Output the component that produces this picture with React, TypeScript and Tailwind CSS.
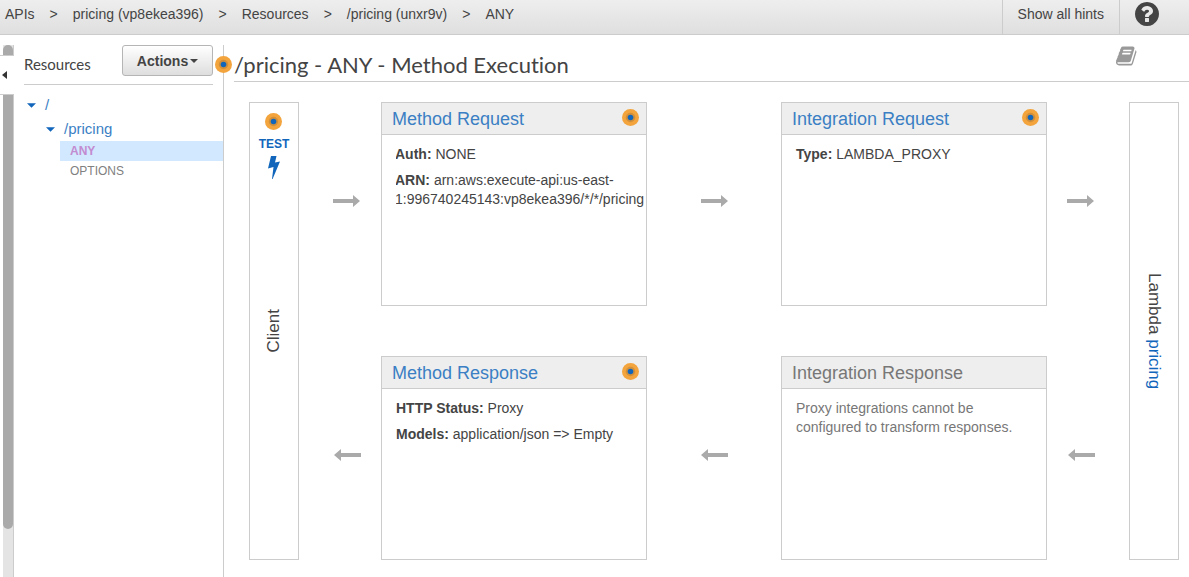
import { Fragment, ReactNode } from 'react';

const CRUMBS = ['APIs', 'pricing (vp8ekea396)', 'Resources', '/pricing (unxr9v)'];

const HintDot = () => (
	<svg className="block h-[17px] w-[17px] shrink-0" viewBox="0 0 17 17" aria-hidden="true">
		<circle cx="8.5" cy="8.5" r="8.5" fill="#f3a43c" />
		<circle cx="8.5" cy="8.5" r="4.7" fill="#d18f3b" />
		<circle cx="8.5" cy="8.5" r="2.8" fill="#1166bb" />
	</svg>
);

const Arrow = ({ back = false }: { back?: boolean }) => (
	<svg className={back ? 'h-3 w-[27px] rotate-180' : 'h-3 w-[27px]'} viewBox="0 0 27 12" aria-hidden="true">
		<path d="M0 4h20V0l7 6-7 6V8H0z" fill="#aaa" />
	</svg>
);

const Caret = ({ className }: { className: string }) => (
	<svg className={className} viewBox="0 0 10 5" aria-hidden="true">
		<path d="M0 0h10L5 5z" fill="currentColor" />
	</svg>
);

const BookIcon = () => (
	<svg className="h-[22px] w-[22px]" viewBox="0 0 1792 1792" fill="currentColor" aria-hidden="true">
		<path d="M1639 478q40 57 18 129l-275 906q-19 64-76.5 107.5t-122.5 43.5h-923q-77 0-148.5-53.5t-99.5-131.5q-24-67-2-127 0-4 3-27t4-37q1-8-3-21.5t-3-19.5q2-11 8-21t16.5-23.5 16.5-23.5q23-38 45-91.5t30-91.5q3-10 .5-30t-.5-28q3-11 17-28t17-23q21-36 42-92t25-90q1-9-2.5-32t.5-28q4-13 22-30.5t22-22.5q19-26 42.5-84.5t27.5-96.5q1-8-3-25.5t-2-26.5q2-8 9-18t18-23 17-21q8-12 16.5-30.5t15-35 16-36 19.5-32 26.5-23.5 36-11.5 47.5 5.5l-1 3q38-9 51-9h761q74 0 114 56t18 130l-274 906q-36 119-71.5 153.5t-128.5 34.5h-869q-27 0-38 15-11 16-1 43 24 70 144 70h923q29 0 56-15.5t35-41.5l300-987q7-22 5-57 38 15 59 43zm-1064 2q-4 13 2 22.5t20 9.5h608q13 0 25.5-9.5t16.5-22.5l21-64q4-13-2-22.5t-20-9.5h-608q-13 0-25.5 9.5t-16.5 22.5zm-83 256q-4 13 2 22.5t20 9.5h608q13 0 25.5-9.5t16.5-22.5l21-64q4-13-2-22.5t-20-9.5h-608q-13 0-25.5 9.5t-16.5 22.5z" />
	</svg>
);

const HelpIcon = () => (
	<svg className="h-7 w-7" viewBox="0 0 1792 1792" fill="currentColor" aria-hidden="true">
		<path d="M1024 1376v-192q0-14-9-23t-23-9h-192q-14 0-23 9t-9 23v192q0 14 9 23t23 9h192q14 0 23-9t9-23zm256-672q0-88-55.5-163t-138.5-116-170-41q-243 0-371 213-15 24 8 42l132 100q7 6 19 6 16 0 25-12 53-68 86-92 34-24 86-24 48 0 85.5 26t37.5 59q0 38-20 61t-68 45q-63 28-115.5 86.5t-52.5 125.5v36q0 14 9 23t23 9h192q14 0 23-9t9-23q0-19 21.5-49.5t54.5-49.5q32-18 49-28.5t46-35 44.5-48 28-60.5 12.5-81zm384 192q0 209-103 385.5t-279.5 279.5-385.5 103-385.5-103-279.5-279.5-103-385.5 103-385.5 279.5-279.5 385.5-103 385.5 103 279.5 279.5 103 385.5z" />
	</svg>
);

const TopBar = () => (
	<header className="flex h-[35px] items-stretch border-b border-[#ccc] bg-linear-to-b from-[#eee] to-[#dfdfdf] text-sm">
		<nav aria-label="Breadcrumb" className="flex flex-1 items-center gap-[15px] pb-1.5 pl-[5px] whitespace-nowrap">
			{CRUMBS.map((crumb) => (
				<Fragment key={crumb}>
					<a href="#" className="hover:underline">
						{crumb}
					</a>
					<span>&gt;</span>
				</Fragment>
			))}
			<span>ANY</span>
		</nav>
		<button className="border-l border-[#ccc] px-[15px] pb-1.5 whitespace-nowrap">Show all hints</button>
		<button aria-label="Help" className="border-l border-[#ccc] pr-7 pb-1.5 pl-[13px] text-[#444]">
			<HelpIcon />
		</button>
	</header>
);

const CollapseRail = () => (
	<div className="relative w-3.5 shrink-0 border-r border-[#ccc] pl-[3px]">
		<div className="h-full bg-[#e4e4e4]">
			<div className="h-[91%] rounded-full bg-[#aaa]" />
		</div>
		<button
			aria-label="Collapse resources"
			className="absolute top-2.5 left-0 flex h-10 w-3.5 items-center border-y border-[#ccc] bg-white pl-0.5"
		>
			<svg className="h-2 w-[5px]" viewBox="0 0 5 8" aria-hidden="true">
				<path d="M5 0v8L0 4z" fill="#333" />
			</svg>
		</button>
	</div>
);

const ResourceTree = () => (
	<aside className="w-[210px] shrink-0 border-r border-[#ccc] pl-2.5">
		<div className="mr-2.5 flex h-10 items-start justify-between border-b border-[#ccc]">
			<h2 className="pt-[9px] font-[Lato,sans-serif] text-[15px] leading-5">Resources</h2>
			<button className="flex h-[31px] w-[91px] items-center justify-center gap-0.5 rounded-[3px] border border-[#b5b5b5] bg-linear-to-b from-white to-[#dedede] text-sm font-bold">
				Actions
				<Caret className="h-1 w-2" />
			</button>
		</div>
		<ul className="mt-2 text-[15px] leading-6 text-[#3b7fc4]">
			<li>
				<a href="#" className="flex items-center gap-[9px] pl-[3px]">
					<Caret className="h-[5px] w-[9px] text-[#1166bb]" />/
				</a>
				<ul>
					<li>
						<a href="#" className="flex items-center gap-[9px] pl-[22px]">
							<Caret className="h-[5px] w-[9px] text-[#1166bb]" />
							/pricing
						</a>
						<ul className="ml-9 text-xs leading-5">
							<li>
								<a href="#" className="block bg-[#d1e8ff] pl-2.5 font-bold text-[#c38bd0]">
									ANY
								</a>
							</li>
							<li>
								<a href="#" className="block pl-2.5 text-[#808080]">
									OPTIONS
								</a>
							</li>
						</ul>
					</li>
				</ul>
			</li>
		</ul>
	</aside>
);

type CardProps = {
	title: string;
	disabled?: boolean;
	children: ReactNode;
};

const StageCard = ({ title, disabled = false, children }: CardProps) => (
	<section className="min-w-0 border border-[#ccc]">
		<div className="flex h-8 items-start justify-between border-b border-[#ccc] bg-[#eee] pt-1 pr-[7px] pl-2.5">
			<h3 className="text-lg leading-6">
				{disabled ? (
					<span className="text-[#777]">{title}</span>
				) : (
					<a href="#" className="text-[#3b7fc4] hover:underline">
						{title}
					</a>
				)}
			</h3>
			{!disabled && (
				<div className="pt-0.5">
					<HintDot />
				</div>
			)}
		</div>
		<div className="pt-2.5 pl-3.5 text-sm leading-[19px]">{children}</div>
	</section>
);

const Field = ({ label, children }: { label: string; children: ReactNode }) => (
	<p className="mb-[7px] break-words">
		<b>{label}:</b> {children}
	</p>
);

const MethodExecution = () => (
	<main className="min-w-0 flex-1">
		<div className="relative ml-2.5 flex h-[37px] items-start justify-between border-b border-[#ccc] pr-[51px]">
			<div className="absolute top-[11px] -left-[19px]">
				<HintDot />
			</div>
			<h1 className="pt-1.5 font-[Lato,sans-serif] text-[22px] leading-7 [font-variant-ligatures:none]">
				/pricing - ANY - Method Execution
			</h1>
			<a href="#" aria-label="Documentation" className="text-[#999]">
				<BookIcon />
			</a>
		</div>

		<div className="mt-5 mr-2.5 ml-[25px] grid grid-cols-[50px_82fr_266fr_134fr_266fr_82fr_50px] grid-rows-[204px_204px] gap-y-[50px]">
			<div className="row-span-2 grid grid-rows-[1fr_auto_1fr] justify-items-center border border-[#ccc]">
				<a href="#" className="flex flex-col items-center pt-2.5 text-xs leading-4 font-bold text-[#1166bb]">
					<HintDot />
					<span className="mt-1.5">TEST</span>
					<svg className="mt-1 h-[23px] w-3" viewBox="0 0 12 23" aria-hidden="true">
						<path d="M3 0h5.500L7 6.500L12 5.500L4.600 23H4L5.500 11L0 12.500z" fill="currentColor" />
					</svg>
				</a>
				<span className="rotate-180 text-[17px] leading-6 [writing-mode:vertical-rl]">Client</span>
			</div>

			<div className="flex items-center justify-center pb-1.5 pl-3">
				<Arrow />
			</div>
			<StageCard title="Method Request">
				{/* long ARNs run up to the edge, the label side is cut */}
				<div className="overflow-hidden">
					<div className="-ml-px">
						<Field label="Auth">NONE</Field>
						<Field label="ARN">
							arn:aws:execute-api:us-east-
							<br />
							<span className="whitespace-nowrap">1:996740245143:vp8ekea396/*/*/pricing</span>
						</Field>
					</div>
				</div>
			</StageCard>
			<div className="flex items-center justify-center pb-1.5">
				<Arrow />
			</div>
			<StageCard title="Integration Request">
				<Field label="Type">LAMBDA_PROXY</Field>
			</StageCard>
			<div className="flex items-center justify-center pr-4 pb-1.5">
				<Arrow />
			</div>

			<div className="row-span-2 flex items-center justify-center border border-[#ccc]">
				<span className="text-[17px] leading-6 [writing-mode:vertical-rl]">
					Lambda{' '}
					<a href="#" className="text-[#1166bb]">
						pricing
					</a>
				</span>
			</div>

			<div className="flex items-center justify-center pb-1.5 pl-3.5">
				<Arrow back />
			</div>
			<StageCard title="Method Response">
				<Field label="HTTP Status">Proxy</Field>
				<Field label="Models">application/json =&gt; Empty</Field>
			</StageCard>
			<div className="flex items-center justify-center pb-1.5">
				<Arrow back />
			</div>
			<StageCard title="Integration Response" disabled>
				<p className="max-w-[232px] text-[#777]">Proxy integrations cannot be configured to transform responses.</p>
			</StageCard>
			<div className="flex items-center justify-center pr-3.5 pb-1.5">
				<Arrow back />
			</div>
		</div>
	</main>
);

export default function App() {
	return (
		<div className="flex min-h-screen flex-col bg-white font-['Liberation_Sans',Arial,sans-serif] text-[#444]">
			<TopBar />
			<div className="flex flex-1 pt-2.5">
				<CollapseRail />
				<ResourceTree />
				<MethodExecution />
			</div>
		</div>
	);
}
